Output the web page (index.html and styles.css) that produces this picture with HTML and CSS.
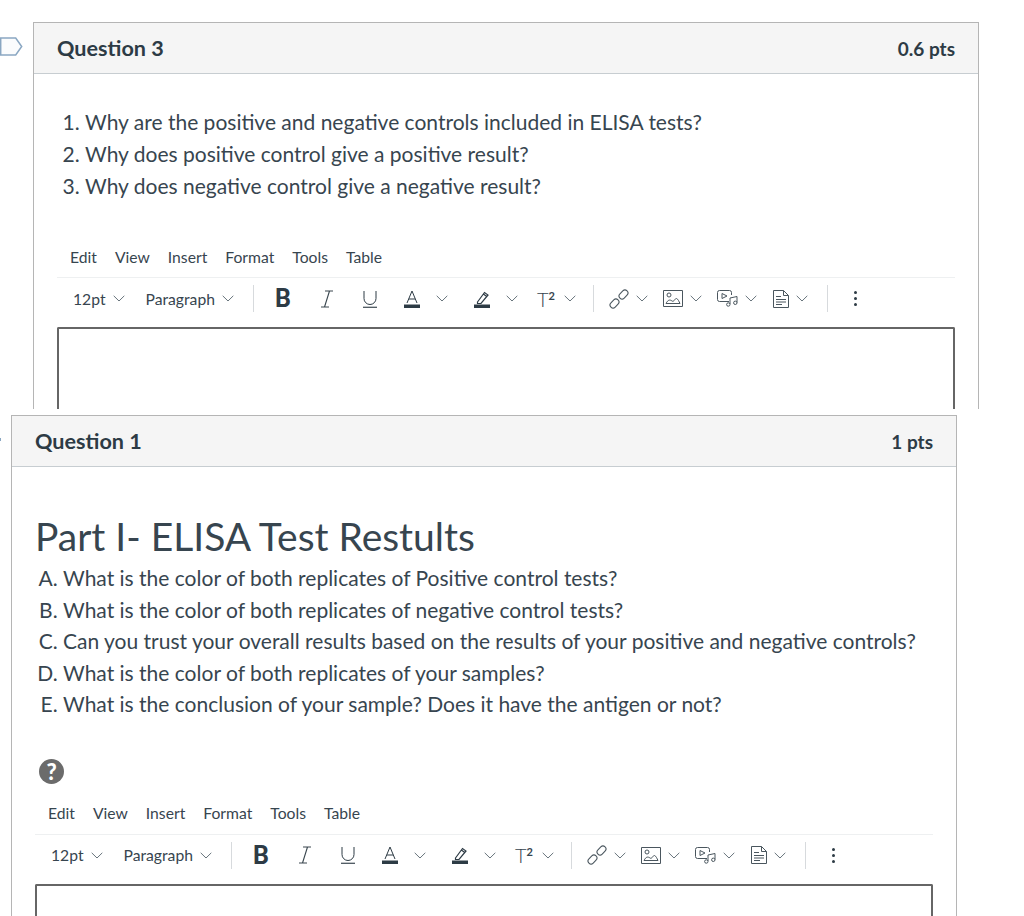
FILE: index.html
```html
<!DOCTYPE html>
<html lang="en">
<head>
  <meta charset="UTF-8">
  <title>Quiz Questions</title>
  <link rel="stylesheet" href="styles.css">
</head>
<body>

  <svg class="defs" width="0" height="0">
    <symbol id="chev" viewBox="0 0 12 7"><path d="M.7.8 6 6 11.300.8" fill="none" stroke="#68747c" stroke-width="1"/></symbol>
    <symbol id="italic" viewBox="0 0 12 18"><path d="M4 1h8M0 17h8M8.500 1 3.500 17" fill="none" stroke="#3a474f" stroke-width="1.100"/></symbol>
    <symbol id="underline" viewBox="0 0 16 18"><path d="M2 1v7.500a6 6 0 0 0 12 0V1" fill="none" stroke="#2d3b45" stroke-width="1"/><path d="M1 17.300h14" fill="none" stroke="#4a565e" stroke-width="1.300"/></symbol>
    <symbol id="color" viewBox="0 0 16 18"><path d="M3 13 8 1l5 12M4.800 9h6.400" fill="none" stroke="#2d3b45" stroke-width="1"/><path d="M0 14.500h16V18H0z" fill="#2d3b45"/></symbol>
    <symbol id="hilite" viewBox="0 0 16 18"><path d="M3.500 12 10.500 2.500l3.500 2.500-7 8.500H3.500zM9.300 4l3.500 2.500" fill="none" stroke="#2d3b45" stroke-width="1.200"/><path d="M0 14.500h16V18H0z" fill="#2d3b45"/></symbol>
    <symbol id="link" viewBox="0 0 20 20"><g fill="none" stroke="#4a565e" stroke-width="1.100"><rect x="-5" y="-3" width="10" height="6" rx="3" transform="translate(5.500 14.500) rotate(-45)"/><rect x="-5" y="-3" width="10" height="6" rx="3" transform="translate(14.500 5.500) rotate(-45)"/></g></symbol>
    <symbol id="image" viewBox="0 0 20 17"><g fill="none" stroke="#4a565e" stroke-width="1"><path d="M.5.500h19v16H.5z"/><circle cx="6" cy="5" r="2"/><path d="M3 13.500c2-4 4-4 6-2.500s3-3 4.500-2.500 2.500 3 3.500 5"/><path d="M3 13.500h14"/></g></symbol>
    <symbol id="media" viewBox="0 0 21 17"><g fill="none" stroke="#4a565e" stroke-width="1"><path d="M12 11.500H2.500a2 2 0 0 1-2-2v-7a2 2 0 0 1 2-2h10a2 2 0 0 1 2 2V5"/><path d="M5 3.500 10 6l-5 2.500z"/><path d="M13 14V8l7-1.500v6"/><circle cx="11.300" cy="14.500" r="1.700"/><circle cx="18.300" cy="12.800" r="1.700"/></g></symbol>
    <symbol id="doc" viewBox="0 0 16 18"><g fill="none" stroke="#4a565e" stroke-width="1"><path d="M.5.500h10l5 5v12H.5zM10.500.500v5h5"/><path d="M3 6.500h5M3 9.500h10M3 12h10M3 14.500h6"/></g></symbol>
  </svg>

  <section class="shot shot-top">
    <svg class="flag" width="23" height="19" viewBox="0 0 23 19"><path d="M.7 1h15l6 8.500-6 8.500H.7z" fill="#fbfcfd" stroke="#8aa7c2" stroke-width="1.500"/></svg>
    <div class="card">
      <div class="card-head">
        <span class="q-title">Question 3</span>
        <span class="q-pts">0.6 pts</span>
      </div>
      <div class="card-body">
        <ol class="q-list">
          <li>Why are the positive and negative controls included in ELISA tests?</li>
          <li>Why does positive control give a positive result?</li>
          <li>Why does negative control give a negative result?</li>
        </ol>
        <div class="editor">
          <div class="menu">
            <span>Edit</span><span>View</span><span>Insert</span><span>Format</span><span>Tools</span><span>Table</span>
          </div>
          <div class="toolbar">
            <span class="tb-text tb-size">12pt</span><svg class="chev"><use href="#chev"/></svg>
            <span class="tb-text tb-para">Paragraph</span><svg class="chev"><use href="#chev"/></svg>
            <i class="sep sep-a"></i>
            <b class="ic-b">B</b>
            <svg class="ic ic-i"><use href="#italic"/></svg>
            <svg class="ic ic-u"><use href="#underline"/></svg>
            <svg class="ic ic-a"><use href="#color"/></svg><svg class="chev"><use href="#chev"/></svg>
            <svg class="ic ic-h"><use href="#hilite"/></svg><svg class="chev"><use href="#chev"/></svg>
            <span class="ic-t">T<sup>2</sup></span><svg class="chev"><use href="#chev"/></svg>
            <i class="sep sep-b"></i>
            <svg class="ic ic-link"><use href="#link"/></svg><svg class="chev"><use href="#chev"/></svg>
            <svg class="ic ic-img"><use href="#image"/></svg><svg class="chev"><use href="#chev"/></svg>
            <svg class="ic ic-media"><use href="#media"/></svg><svg class="chev"><use href="#chev"/></svg>
            <svg class="ic ic-doc"><use href="#doc"/></svg><svg class="chev"><use href="#chev"/></svg>
            <i class="sep sep-c"></i>
            <span class="dots"><i></i><i></i><i></i></span>
          </div>
          <div class="textbox"></div>
        </div>
      </div>
    </div>
  </section>

  <section class="shot shot-bottom">
    <i class="flag-tip"></i>
    <div class="card">
      <div class="card-head">
        <span class="q-title">Question 1</span>
        <span class="q-pts">1 pts</span>
      </div>
      <div class="card-body">
        <h2 class="part">Part I- ELISA Test Restults</h2>
        <ol class="q-list alpha">
          <li>What is the color of both replicates of Positive control tests?</li>
          <li>What is the color of both replicates of negative control tests?</li>
          <li>Can you trust your overall results based on the results of your positive and negative controls?</li>
          <li>What is the color of both replicates of your samples?</li>
          <li>What is the conclusion of your sample? Does it have the antigen or not?</li>
        </ol>
        <span class="help">?</span>
        <div class="editor">
          <div class="menu">
            <span>Edit</span><span>View</span><span>Insert</span><span>Format</span><span>Tools</span><span>Table</span>
          </div>
          <div class="toolbar">
            <span class="tb-text tb-size">12pt</span><svg class="chev"><use href="#chev"/></svg>
            <span class="tb-text tb-para">Paragraph</span><svg class="chev"><use href="#chev"/></svg>
            <i class="sep sep-a"></i>
            <b class="ic-b">B</b>
            <svg class="ic ic-i"><use href="#italic"/></svg>
            <svg class="ic ic-u"><use href="#underline"/></svg>
            <svg class="ic ic-a"><use href="#color"/></svg><svg class="chev"><use href="#chev"/></svg>
            <svg class="ic ic-h"><use href="#hilite"/></svg><svg class="chev"><use href="#chev"/></svg>
            <span class="ic-t">T<sup>2</sup></span><svg class="chev"><use href="#chev"/></svg>
            <i class="sep sep-b"></i>
            <svg class="ic ic-link"><use href="#link"/></svg><svg class="chev"><use href="#chev"/></svg>
            <svg class="ic ic-img"><use href="#image"/></svg><svg class="chev"><use href="#chev"/></svg>
            <svg class="ic ic-media"><use href="#media"/></svg><svg class="chev"><use href="#chev"/></svg>
            <svg class="ic ic-doc"><use href="#doc"/></svg><svg class="chev"><use href="#chev"/></svg>
            <i class="sep sep-c"></i>
            <span class="dots"><i></i><i></i><i></i></span>
          </div>
          <div class="textbox"></div>
        </div>
      </div>
    </div>
  </section>

</body>
</html>
```

FILE: styles.css
```css
* {
  margin: 0;
  padding: 0;
  box-sizing: border-box;
}

html, body {
  height: 916px;
  overflow: hidden;
}

body {
  font-family: Lato, "Open Sans", sans-serif;
  background-color: #fff;
  color: #2d3b45;
}

.defs {
  position: absolute;
}

.shot {
  overflow: hidden;
  position: relative;
}

.shot-top {
  height: 409px;
  padding: 22px 45px 0 33px;
}

.shot-bottom {
  height: 507px;
  padding: 6px 67px 0 11px;
}

.flag {
  position: absolute;
  left: 0;
  top: 37px;
}

.flag-tip {
  position: absolute;
  left: 0;
  top: 29px;
  width: 1px;
  height: 3px;
  background-color: #8aa7c2;
}

.card {
  border: 1px solid #b5b5b5;
  background-color: #fff;
}

.card-head {
  display: flex;
  justify-content: space-between;
  align-items: center;
  height: 51px;
  padding: 0 23px;
  background-color: #f5f5f5;
  border-bottom: 1px solid #c7cdd1;
}

.q-title {
  font-size: 21.6px;
  font-weight: 700;
}

.q-pts {
  font-size: 19px;
  font-weight: 700;
}

.card-body {
  padding: 32px 23px 0;
}

.q-list {
  padding-left: 28px;
  font-size: 21px;
  line-height: 32px;
  color: #37454f;
}

.q-list.alpha {
  list-style-type: upper-alpha;
  line-height: 31.5px;
}

.part {
  font-size: 39px;
  font-weight: 400;
  line-height: 46px;
  margin-top: 14px;
  margin-bottom: 3px;
  color: #37454f;
}

.help {
  display: flex;
  justify-content: center;
  align-items: center;
  width: 25px;
  height: 25px;
  margin: 39px 0 0 4px;
  border-radius: 50%;
  background-color: #6b6b6b;
  color: #fff;
  font-size: 22px;
  font-weight: 900;
}

.editor {
  margin-top: 37px;
}

.shot-bottom .editor {
  margin-top: 11px;
}

.menu {
  display: flex;
  gap: 18px;
  padding-left: 13px;
  height: 39px;
  line-height: 36px;
  font-size: 15.7px;
  color: #37454f;
  border-bottom: 1px solid #eef0f1;
}

.shot-bottom .menu {
  height: 40px;
}

.toolbar {
  display: flex;
  align-items: center;
  height: 41px;
  padding-left: 16px;
  color: #37454f;
}

.tb-text {
  font-size: 15.7px;
}

.chev {
  width: 12px;
  height: 7px;
  flex-shrink: 0;
  margin-left: 7px;
}

.tb-para {
  margin-left: 21px;
}

.sep {
  width: 1px;
  height: 27px;
  background-color: #d7dadd;
  flex-shrink: 0;
}

.sep-a {
  margin-left: 19px;
}

.ic-b {
  margin-left: 21px;
  font-family: Roboto, Inter, sans-serif;
  font-size: 25px;
  font-weight: 700;
  line-height: 1;
  width: 18px;
  color: #2d3b45;
}

.ic {
  width: 16px;
  height: 18px;
  flex-shrink: 0;
}

.ic-i {
  width: 12px;
  margin-left: 28px;
}

.ic-u {
  margin-left: 29px;
}

.ic-a {
  margin-left: 26px;
}

.ic-a + .chev {
  margin-left: 16px;
}

.ic-h {
  margin-left: 26px;
}

.ic-h + .chev {
  margin-left: 16px;
}

.ic-t {
  margin-left: 19px;
  width: 20px;
  font-size: 20px;
  font-weight: 300;
  line-height: 1;
}

.ic-t sup {
  font-size: 11px;
  font-weight: 700;
  vertical-align: 7px;
  line-height: 0;
}

.sep-b {
  margin-left: 17px;
}

.ic-link {
  width: 20px;
  height: 20px;
  margin-left: 15px;
}

.ic-img {
  width: 20px;
  height: 17px;
  margin-left: 15px;
}

.ic-media {
  width: 21px;
  height: 17px;
  margin-left: 15px;
}

.ic-doc {
  height: 18px;
  margin-left: 16px;
}

.sep-c {
  margin-left: 19px;
}

.dots {
  display: flex;
  flex-direction: column;
  gap: 3px;
  margin-left: 26px;
}

.dots i {
  width: 3px;
  height: 3px;
  border-radius: 50%;
  background-color: #2d3b45;
}

.textbox {
  height: 120px;
  margin-top: 8px;
  border: 2px solid #666;
  border-bottom: none;
  border-radius: 2px 2px 0 0;
}
```
